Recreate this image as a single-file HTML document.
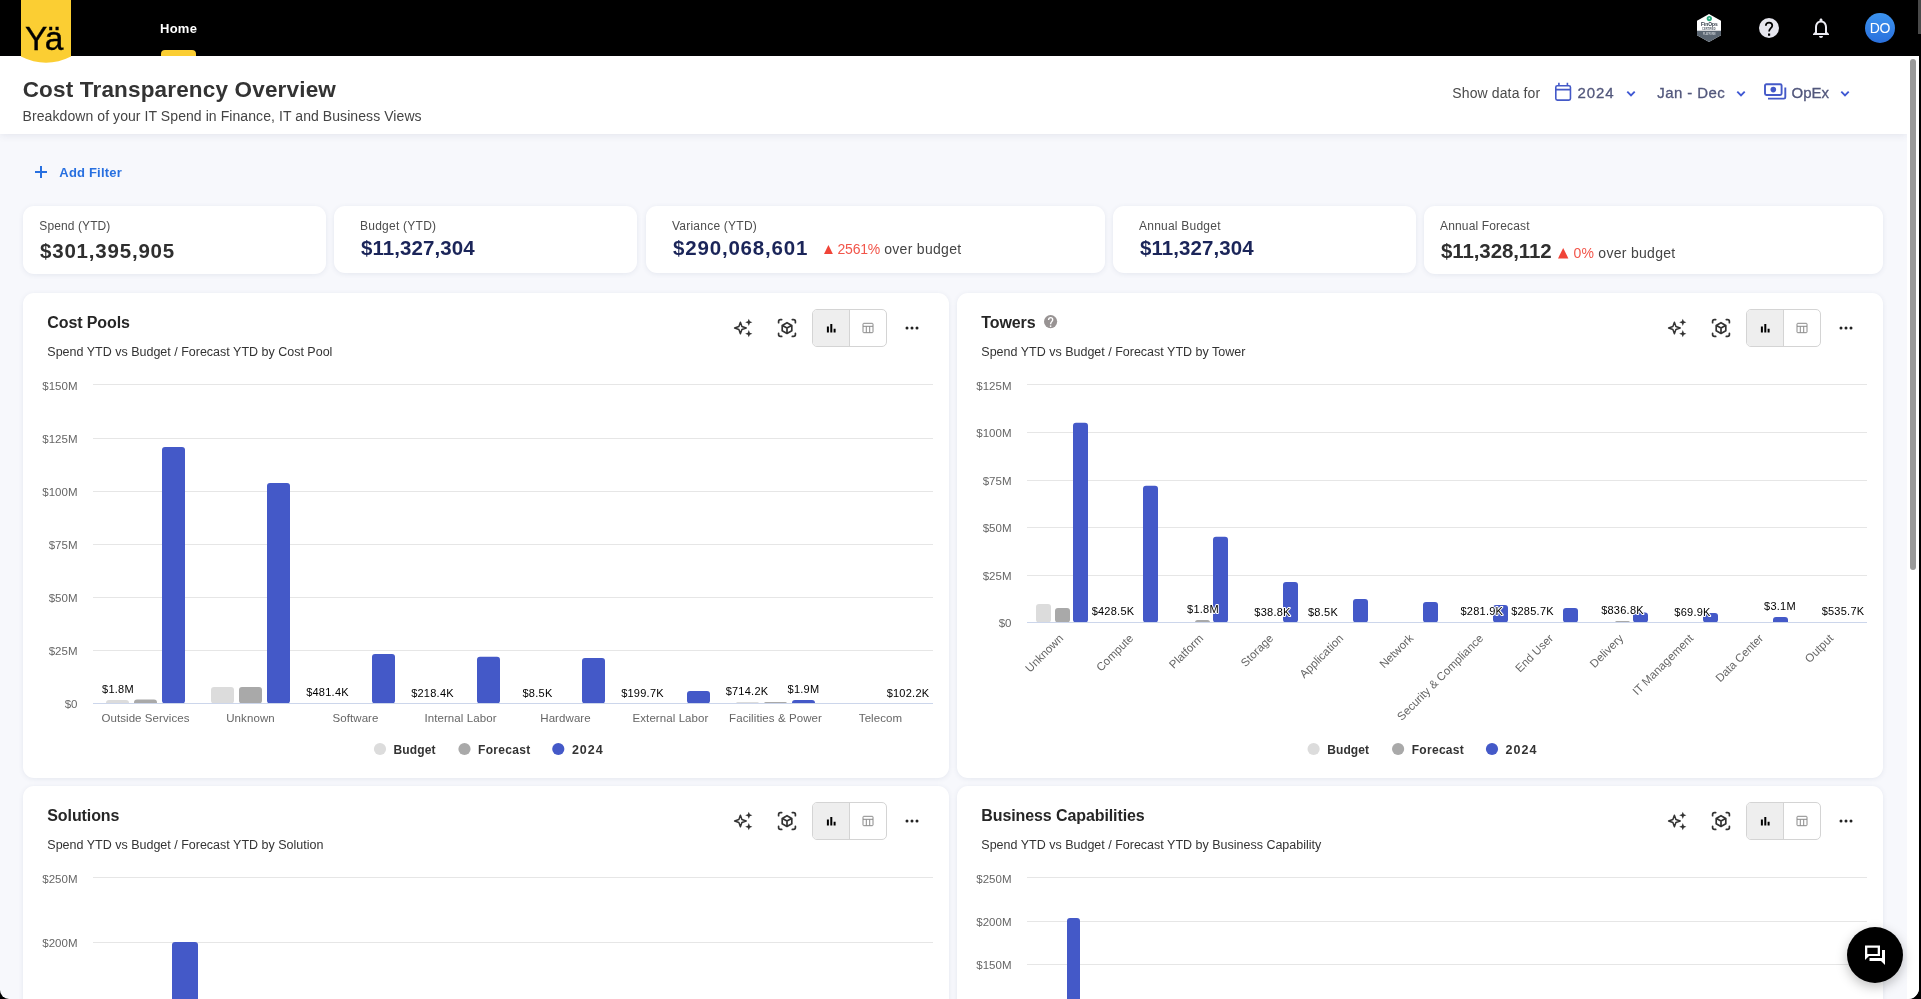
<!DOCTYPE html>
<html lang="en"><head><meta charset="utf-8"><title>Cost Transparency Overview</title>
<style>
html,body{margin:0;padding:0;width:1921px;height:999px;overflow:hidden;background:#000;}
body{font-family:"Liberation Sans",sans-serif;color:#333;-webkit-font-smoothing:antialiased;}
#app{will-change:transform;position:absolute;left:0;top:0;width:1919px;height:999px;background:#f7f8fc;overflow:hidden;border-bottom-right-radius:11px;border-bottom-left-radius:9px;}
.abs{position:absolute;white-space:nowrap;line-height:1;}
#topbar{position:absolute;left:0;top:0;width:1919px;height:56px;background:#000;}
#hdr{position:absolute;left:0;top:56px;width:1907px;height:78px;background:#fff;box-shadow:0 1px 8px rgba(40,50,90,.10);}
#track{position:absolute;left:1907px;top:56px;width:12px;height:943px;background:#fff;}
#thumb{position:absolute;left:1910px;top:59px;width:6px;height:511px;background:#9a9a9a;border-radius:3px;}
.card{position:absolute;background:#fff;border-radius:11px;box-shadow:0 1px 5px rgba(70,90,130,.10);}
.kl{font-size:12px;color:#4d4d4d;}
.kv{font-size:20.5px;font-weight:bold;}
.navy{color:#1b2559;}
.dk{color:#2f2f2f;}
.red{color:#f2554a;}
.ct{font-size:16px;font-weight:bold;color:#262626;}
.cs{font-size:12.5px;color:#333;}
svg{position:absolute;overflow:visible;}
svg text{font-family:"Liberation Sans",sans-serif;}
.yl{font-size:11.5px;fill:#666;text-anchor:end;}
.xl{font-size:11.5px;letter-spacing:.08px;fill:#666;text-anchor:middle;}
.xr{font-size:11.5px;fill:#666;text-anchor:end;}
.dl{font-size:11px;letter-spacing:.25px;fill:#000;text-anchor:middle;paint-order:stroke;stroke:#fff;stroke-width:2px;stroke-linejoin:round;}
.lg{font-size:13px;font-weight:bold;fill:#333;}
.tg{position:absolute;width:75px;height:38px;border:1px solid #d4d4d4;border-radius:5px;box-sizing:border-box;background:#fff;overflow:hidden;}
.tg i{position:absolute;left:0;top:0;width:37px;height:36px;background:#eee;border-right:1px solid #d4d4d4;box-sizing:border-box;}
</style></head><body>
<div id="app">

<div id="topbar"></div>
<div id="hdr"></div>
<div id="track"></div><div id="thumb"></div>
<svg style="left:21px;top:0" width="50" height="64" viewBox="0 0 50 64"><path d="M0 0H50V56.500Q25 69 0 56.500Z" fill="#fbce33"/></svg>
<div class="abs" style="left:25px;top:21.5px;font-size:33.5px;color:#000;letter-spacing:-2.5px;-webkit-text-stroke:.35px #000">Y&auml;</div>
<div class="abs" style="left:160px;top:22px;font-size:13px;font-weight:bold;color:#fff;letter-spacing:.25px">Home</div>
<div class="abs" style="left:161px;top:50px;width:35px;height:6px;background:#fbce33;border-radius:4px 4px 0 0"></div>
<svg style="left:1696px;top:13px" width="26" height="30" viewBox="0 0 26 30">
<path d="M13 1L25 7.800V22.200L13 29L1 22.200V7.800Z" fill="#fff"/>
<path d="M1 17.800H25V22.200L13 29L1 22.200Z" fill="#5b6672"/>
<circle cx="13.300" cy="5.600" r="2.600" fill="#2aa87e"/>
<circle cx="13.300" cy="5.400" r=".8" fill="#c8efe0"/>
<text x="4.900" y="12.800" font-size="5.400" font-weight="bold" fill="#2a3340" textLength="16.800" lengthAdjust="spacingAndGlyphs">FinOps</text>
<text x="6.100" y="16.600" font-size="2.600" font-weight="bold" fill="#59616c" textLength="13.600" lengthAdjust="spacingAndGlyphs">CERTIFIED</text>
<text x="7" y="21.800" font-size="2.700" font-weight="bold" fill="#ccd1d6" textLength="12.400" lengthAdjust="spacingAndGlyphs">PLATFORM</text>
</svg>
<svg style="left:1759px;top:18px" width="20" height="20" viewBox="0 0 24 24"><circle cx="12" cy="12" r="12" fill="#e6e6ee"/>
<path d="M8.200 9.300C8.200 6.700 9.900 5.400 12 5.400C14.200 5.400 15.900 6.800 15.900 8.900C15.900 12.100 12.100 12.400 12.100 16.300" fill="none" stroke="#000" stroke-width="2.100"/><rect x="10.800" y="18.600" width="2.600" height="2.700" fill="#000"/></svg>
<svg style="left:1809px;top:16px" width="24" height="24" viewBox="0 0 24 24"><path fill="#ececf3" d="M12 22c1.1 0 2-.9 2-2h-4c0 1.1.9 2 2 2zm6-6v-5c0-3.070-1.630-5.640-4.500-6.320V4c0-.830-.670-1.500-1.500-1.500s-1.500.670-1.500 1.500v.680C7.640 5.360 6 7.920 6 11v5l-2 2v1h16v-1l-2-2zm-2 1H8v-6c0-2.480 1.510-4.500 4-4.500s4 2.020 4 4.500v6z"/></svg>
<div class="abs" style="left:1865px;top:13px;width:30px;height:30px;border-radius:50%;background:linear-gradient(#3c93ee,#2a70dd);"></div>
<div class="abs" style="left:1865px;top:20.5px;width:30px;text-align:center;font-size:14px;color:#fff;letter-spacing:-.2px">DO</div>
<div class="abs" style="left:22.7px;top:78.5px;font-size:22.5px;font-weight:bold;color:#333;letter-spacing:.17px;">Cost Transparency Overview</div>
<div class="abs" style="left:22.6px;top:109px;font-size:14px;color:#444;letter-spacing:.075px;">Breakdown of your IT Spend in Finance, IT and Business Views</div>
<div class="abs" style="left:1452.3px;top:86px;font-size:14px;color:#4a4a4a;letter-spacing:.12px;">Show data for</div>
<svg style="left:1554px;top:82px" width="18" height="20" viewBox="0 0 18 20"><rect x="1.800" y="3.800" width="14.650" height="14.300" rx="1.500" fill="none" stroke="#4459c8" stroke-width="1.600"/><path d="M1.800 7.600H16.450M4.900 .8V4M13.400 .8V4" stroke="#4459c8" stroke-width="1.600" fill="none"/></svg>
<div class="abs" style="left:1577.5px;top:85px;font-size:15px;color:#52577c;letter-spacing:.9px;-webkit-text-stroke:.3px #52577c">2024</div>
<svg style="left:1626px;top:90px" width="10" height="8" viewBox="0 0 10 8"><path d="M1.3 1.6L5 5.3L8.7 1.6" fill="none" stroke="#3f58d3" stroke-width="1.9"/></svg>
<div class="abs" style="left:1657.3px;top:85px;font-size:15px;color:#52577c;letter-spacing:.42px;-webkit-text-stroke:.3px #52577c">Jan - Dec</div>
<svg style="left:1736px;top:90px" width="10" height="8" viewBox="0 0 10 8"><path d="M1.3 1.6L5 5.3L8.7 1.6" fill="none" stroke="#3f58d3" stroke-width="1.9"/></svg>
<svg style="left:1764px;top:83px" width="23" height="18" viewBox="0 0 23 18"><rect x="1" y="1.2" width="16.6" height="10.8" rx="1.4" fill="none" stroke="#4459c8" stroke-width="1.9"/><circle cx="9.3" cy="6.6" r="2.8" fill="#4459c8"/><path d="M21.3 4.4V14.2Q21.3 15.6 19.9 15.6H4" fill="none" stroke="#4459c8" stroke-width="1.9"/></svg>
<div class="abs" style="left:1791.5px;top:85px;font-size:15px;color:#52577c;-webkit-text-stroke:.3px #52577c">OpEx</div>
<svg style="left:1840px;top:90px" width="10" height="8" viewBox="0 0 10 8"><path d="M1.3 1.6L5 5.3L8.7 1.6" fill="none" stroke="#3f58d3" stroke-width="1.9"/></svg>
<svg style="left:35px;top:166px" width="12" height="12" viewBox="0 0 12 12"><path d="M6 0V12M0 6H12" stroke="#2870e0" stroke-width="2" fill="none"/></svg>
<div class="abs" style="left:59.3px;top:166px;font-size:13px;font-weight:bold;color:#2870e0;letter-spacing:.2px;">Add Filter</div>
<div class="card" style="left:23px;top:206px;width:303px;height:67.7px"></div>
<div class="card" style="left:334px;top:206px;width:303px;height:67px"></div>
<div class="card" style="left:646px;top:206px;width:459px;height:67px"></div>
<div class="card" style="left:1113px;top:206px;width:303px;height:67px"></div>
<div class="card" style="left:1424px;top:206px;width:459px;height:67.7px"></div>
<div class="abs kl" style="left:39.3px;top:220px;letter-spacing:.1px">Spend (YTD)</div>
<div class="abs kv dk" style="left:40px;top:241px;letter-spacing:.8px">$301,395,905</div>
<div class="abs kl" style="left:360px;top:220px;letter-spacing:.25px">Budget (YTD)</div>
<div class="abs kv navy" style="left:361px;top:238px;letter-spacing:.07px">$11,327,304</div>
<div class="abs kl" style="left:672px;top:220px;letter-spacing:.23px">Variance (YTD)</div>
<div class="abs kv navy" style="left:673px;top:238px;letter-spacing:.82px">$290,068,601</div>
<svg style="left:823.5px;top:244.6px" width="8.9" height="8.9" viewBox="0 0 10 10"><path d="M5 0L10 10H0Z" fill="#f04438"/></svg>
<div class="abs red" style="left:837.5px;top:241.9px;font-size:14px;letter-spacing:-.2px">2561%</div>
<div class="abs" style="left:884.2px;top:241.9px;font-size:14px;color:#444;letter-spacing:.3px">over budget</div>
<div class="abs kl" style="left:1139px;top:220px;letter-spacing:.23px">Annual Budget</div>
<div class="abs kv navy" style="left:1140px;top:238px;letter-spacing:.07px">$11,327,304</div>
<div class="abs kl" style="left:1440px;top:220px;letter-spacing:.15px">Annual Forecast</div>
<div class="abs kv dk" style="left:1441px;top:240.7px;letter-spacing:-.1px">$11,328,112</div>
<svg style="left:1558.3px;top:247.6px" width="10.4" height="10.4" viewBox="0 0 10 10"><path d="M5 0L10 10H0Z" fill="#f04438"/></svg>
<div class="abs red" style="left:1573.6px;top:246.1px;font-size:14px">0%</div>
<div class="abs" style="left:1598.3px;top:246.1px;font-size:14px;color:#444;letter-spacing:.3px">over budget</div>
<div class="card" style="left:23px;top:293px;width:926px;height:484.5px"></div>
<div class="abs ct" style="left:47.3px;top:314.7px;letter-spacing:-.1px">Cost Pools</div>
<div class="abs cs" style="left:47.3px;top:345.7px">Spend YTD vs Budget / Forecast YTD by Cost Pool</div>
<svg style="left:731px;top:316px" width="24" height="24" viewBox="0 0 24 24"><path d="M9.400 6.200L10.900 10.500L15.200 12L10.900 13.500L9.400 17.800L7.900 13.500L3.600 12L7.900 10.500Z" fill="none" stroke="#333" stroke-width="1.500" stroke-linejoin="round"/><path d="M17.800 2.700L18.800 5.300L21.400 6.300L18.800 7.300L17.800 9.900L16.800 7.300L14.200 6.300L16.800 5.300Z" fill="#333"/><path d="M17.800 14.100L18.800 16.700L21.400 17.700L18.800 18.700L17.800 21.300L16.800 18.700L14.200 17.700L16.800 16.700Z" fill="#333"/></svg>
<svg style="left:775px;top:316px" width="24" height="24" viewBox="0 0 24 24"><g fill="none" stroke="#333" stroke-width="1.700" stroke-linecap="round" stroke-linejoin="round"><path d="M3.600 6.700V5.400Q3.600 3.600 5.400 3.600H6.700M17.300 3.600H18.600Q20.400 3.600 20.400 5.400V6.700M20.400 17.300V18.600Q20.400 20.400 18.600 20.400H17.300M6.700 20.400H5.400Q3.600 20.400 3.600 18.600V17.300"/><path d="M12 6.700L16.800 9.400V14.700L12 17.400L7.200 14.700V9.400ZM7.400 9.500L12 12.100L16.600 9.500M12 12.100V17.300"/></g></svg>
<div class="tg" style="left:812px;top:309px"><i></i></div>
<svg style="left:826.6px;top:323.6px" width="10" height="10" viewBox="0 0 10 10"><path d="M.9 2.600V8.500M4.300 0V8.500M7.600 4.700V8.500" stroke="#000" stroke-width="2" fill="none"/></svg>
<svg style="left:862px;top:322px" width="12" height="12" viewBox="0 0 12 12"><g fill="none" stroke="#8a8a8a" stroke-width="1"><rect x="1" y="1.300" width="10" height="9.400" rx=".8"/><path d="M1 4.300H11M4.300 4.300V10.700M7.700 4.300V10.700"/></g></svg>
<svg style="left:904px;top:326px" width="16" height="4" viewBox="0 0 16 4"><circle cx="3" cy="2" r="1.500" fill="#222"/><circle cx="8" cy="2" r="1.500" fill="#222"/><circle cx="13" cy="2" r="1.500" fill="#222"/></svg>
<svg style="left:0;top:0" width="1919" height="999" viewBox="0 0 1919 999"><path d="M93 384.5H933" stroke="#e6e6e6" stroke-width="1"/><text class="yl" x="77.5" y="389.8">$150M</text><path d="M93 438.5H933" stroke="#e6e6e6" stroke-width="1"/><text class="yl" x="77.5" y="442.5">$125M</text><path d="M93 491.5H933" stroke="#e6e6e6" stroke-width="1"/><text class="yl" x="77.5" y="495.5">$100M</text><path d="M93 544.5H933" stroke="#e6e6e6" stroke-width="1"/><text class="yl" x="77.5" y="548.5">$75M</text><path d="M93 597.5H933" stroke="#e6e6e6" stroke-width="1"/><text class="yl" x="77.5" y="601.5">$50M</text><path d="M93 650.5H933" stroke="#e6e6e6" stroke-width="1"/><text class="yl" x="77.5" y="654.5">$25M</text><text class="yl" x="77.5" y="707.5">$0</text><path d="M106.00 703.5V703.00Q106.00 700.00 109.00 700.00H126.00Q129.00 700.00 129.00 703.00V703.5Z" fill="#dcdcdc"/><path d="M134.00 703.5V702.50Q134.00 699.50 137.00 699.50H154.00Q157.00 699.50 157.00 702.50V703.5Z" fill="#a9a9a9"/><rect x="162.00" y="447.00" width="23" height="256.50" rx="3" fill="#4459c8"/><rect x="211.00" y="687.00" width="23" height="16.50" rx="3" fill="#dcdcdc"/><rect x="239.00" y="687.00" width="23" height="16.50" rx="3" fill="#a9a9a9"/><rect x="267.00" y="483.00" width="23" height="220.50" rx="3" fill="#4459c8"/><rect x="372.00" y="654.00" width="23" height="49.50" rx="3" fill="#4459c8"/><rect x="477.00" y="656.80" width="23" height="46.70" rx="3" fill="#4459c8"/><rect x="582.00" y="658.00" width="23" height="45.50" rx="3" fill="#4459c8"/><rect x="687.00" y="691.00" width="23" height="12.50" rx="3" fill="#4459c8"/><path d="M736.00 703.5V703.50Q736.00 702.00 737.50 702.00H757.50Q759.00 702.00 759.00 703.50V703.5Z" fill="#dcdcdc"/><path d="M764.00 703.5V703.50Q764.00 702.00 765.50 702.00H785.50Q787.00 702.00 787.00 703.50V703.5Z" fill="#a9a9a9"/><path d="M792.00 703.5V703.00Q792.00 700.00 795.00 700.00H812.00Q815.00 700.00 815.00 703.00V703.5Z" fill="#4459c8"/><path d="M93 703.5H933" stroke="#ccd6eb" stroke-width="1"/><text class="xl" x="145.5" y="722.0">Outside Services</text><text class="xl" x="250.5" y="722.0">Unknown</text><text class="xl" x="355.5" y="722.0">Software</text><text class="xl" x="460.5" y="722.0">Internal Labor</text><text class="xl" x="565.5" y="722.0">Hardware</text><text class="xl" x="670.5" y="722.0">External Labor</text><text class="xl" x="775.5" y="722.0">Facilities &amp; Power</text><text class="xl" x="880.5" y="722.0">Telecom</text><text class="dl" x="118" y="693">$1.8M</text><text class="dl" x="327.5" y="696">$481.4K</text><text class="dl" x="432.5" y="697">$218.4K</text><text class="dl" x="537.5" y="697">$8.5K</text><text class="dl" x="642.5" y="697">$199.7K</text><text class="dl" x="747" y="694.5">$714.2K</text><text class="dl" x="803.5" y="693">$1.9M</text><text class="dl" x="908" y="697">$102.2K</text><circle cx="380" cy="749" r="6.1" fill="#dcdcdc"/><text class="lg" x="393.6" y="753.8" style="letter-spacing:0.1px;font-size:12px">Budget</text><circle cx="464.5" cy="749" r="6.1" fill="#a9a9a9"/><text class="lg" x="478.1" y="753.8" style="letter-spacing:0.3px;font-size:12px">Forecast</text><circle cx="558.3" cy="749" r="6.1" fill="#4459c8"/><text class="lg" x="571.9" y="753.8" style="letter-spacing:1.0px;font-size:12.5px">2024</text></svg>
<div class="card" style="left:957px;top:293px;width:926px;height:484.5px"></div>
<div class="abs ct" style="left:981.3px;top:314.7px;letter-spacing:-.1px">Towers</div>
<div class="abs cs" style="left:981.3px;top:345.7px">Spend YTD vs Budget / Forecast YTD by Tower</div>
<svg style="left:1665px;top:316px" width="24" height="24" viewBox="0 0 24 24"><path d="M9.400 6.200L10.900 10.500L15.200 12L10.900 13.500L9.400 17.800L7.900 13.500L3.600 12L7.900 10.500Z" fill="none" stroke="#333" stroke-width="1.500" stroke-linejoin="round"/><path d="M17.800 2.700L18.800 5.300L21.400 6.300L18.800 7.300L17.800 9.900L16.800 7.300L14.200 6.300L16.800 5.300Z" fill="#333"/><path d="M17.800 14.100L18.800 16.700L21.400 17.700L18.800 18.700L17.800 21.300L16.800 18.700L14.200 17.700L16.800 16.700Z" fill="#333"/></svg>
<svg style="left:1709px;top:316px" width="24" height="24" viewBox="0 0 24 24"><g fill="none" stroke="#333" stroke-width="1.700" stroke-linecap="round" stroke-linejoin="round"><path d="M3.600 6.700V5.400Q3.600 3.600 5.400 3.600H6.700M17.300 3.600H18.600Q20.400 3.600 20.400 5.400V6.700M20.400 17.300V18.600Q20.400 20.400 18.600 20.400H17.300M6.700 20.400H5.400Q3.600 20.400 3.600 18.600V17.300"/><path d="M12 6.700L16.800 9.400V14.700L12 17.400L7.200 14.700V9.400ZM7.400 9.500L12 12.100L16.600 9.500M12 12.100V17.300"/></g></svg>
<div class="tg" style="left:1746px;top:309px"><i></i></div>
<svg style="left:1760.6px;top:323.6px" width="10" height="10" viewBox="0 0 10 10"><path d="M.9 2.600V8.500M4.300 0V8.500M7.600 4.700V8.500" stroke="#000" stroke-width="2" fill="none"/></svg>
<svg style="left:1796px;top:322px" width="12" height="12" viewBox="0 0 12 12"><g fill="none" stroke="#8a8a8a" stroke-width="1"><rect x="1" y="1.300" width="10" height="9.400" rx=".8"/><path d="M1 4.300H11M4.300 4.300V10.700M7.700 4.300V10.700"/></g></svg>
<svg style="left:1838px;top:326px" width="16" height="4" viewBox="0 0 16 4"><circle cx="3" cy="2" r="1.500" fill="#222"/><circle cx="8" cy="2" r="1.500" fill="#222"/><circle cx="13" cy="2" r="1.500" fill="#222"/></svg>
<svg style="left:0;top:0" width="1919" height="999" viewBox="0 0 1919 999"><path d="M1027 384.5H1867" stroke="#e6e6e6" stroke-width="1"/><text class="yl" x="1011.5" y="389.8">$125M</text><path d="M1027 432.5H1867" stroke="#e6e6e6" stroke-width="1"/><text class="yl" x="1011.5" y="436.5">$100M</text><path d="M1027 480.5H1867" stroke="#e6e6e6" stroke-width="1"/><text class="yl" x="1011.5" y="484.5">$75M</text><path d="M1027 527.5H1867" stroke="#e6e6e6" stroke-width="1"/><text class="yl" x="1011.5" y="531.5">$50M</text><path d="M1027 575.5H1867" stroke="#e6e6e6" stroke-width="1"/><text class="yl" x="1011.5" y="579.5">$25M</text><text class="yl" x="1011.5" y="626.5">$0</text><rect x="1036.00" y="604.00" width="15" height="18.50" rx="3" fill="#dcdcdc"/><rect x="1055.00" y="608.00" width="15" height="14.50" rx="3" fill="#a9a9a9"/><rect x="1073.00" y="422.80" width="15" height="199.70" rx="3" fill="#4459c8"/><rect x="1143.00" y="485.80" width="15" height="136.70" rx="3" fill="#4459c8"/><path d="M1195.00 622.5V622.50Q1195.00 620.00 1197.50 620.00H1207.50Q1210.00 620.00 1210.00 622.50V622.5Z" fill="#a9a9a9"/><rect x="1213.00" y="536.80" width="15" height="85.70" rx="3" fill="#4459c8"/><rect x="1283.00" y="582.00" width="15" height="40.50" rx="3" fill="#4459c8"/><rect x="1353.00" y="599.00" width="15" height="23.50" rx="3" fill="#4459c8"/><rect x="1423.00" y="602.00" width="15" height="20.50" rx="3" fill="#4459c8"/><rect x="1493.00" y="605.00" width="15" height="17.50" rx="3" fill="#4459c8"/><rect x="1563.00" y="608.00" width="15" height="14.50" rx="3" fill="#4459c8"/><path d="M1615.00 622.5V622.50Q1615.00 621.00 1616.50 621.00H1628.50Q1630.00 621.00 1630.00 622.50V622.5Z" fill="#a9a9a9"/><rect x="1633.00" y="612.50" width="15" height="10.00" rx="3" fill="#4459c8"/><rect x="1703.00" y="613.00" width="15" height="9.50" rx="3" fill="#4459c8"/><path d="M1773.00 622.5V620.00Q1773.00 617.00 1776.00 617.00H1785.00Q1788.00 617.00 1788.00 620.00V622.5Z" fill="#4459c8"/><path d="M1027 622.5H1867" stroke="#ccd6eb" stroke-width="1"/><text class="xr" transform="translate(1064.0 639.0) rotate(-45)">Unknown</text><text class="xr" transform="translate(1134.0 639.0) rotate(-45)">Compute</text><text class="xr" transform="translate(1204.0 639.0) rotate(-45)">Platform</text><text class="xr" transform="translate(1274.0 639.0) rotate(-45)">Storage</text><text class="xr" transform="translate(1344.0 639.0) rotate(-45)">Application</text><text class="xr" transform="translate(1414.0 639.0) rotate(-45)">Network</text><text class="xr" transform="translate(1484.0 639.0) rotate(-45)">Security &amp; Compliance</text><text class="xr" transform="translate(1554.0 639.0) rotate(-45)">End User</text><text class="xr" transform="translate(1624.0 639.0) rotate(-45)">Delivery</text><text class="xr" transform="translate(1694.0 639.0) rotate(-45)">IT Management</text><text class="xr" transform="translate(1764.0 639.0) rotate(-45)">Data Center</text><text class="xr" transform="translate(1834.0 639.0) rotate(-45)">Output</text><text class="dl" x="1113" y="615">$428.5K</text><text class="dl" x="1203" y="613">$1.8M</text><text class="dl" x="1272.5" y="616">$38.8K</text><text class="dl" x="1323" y="616">$8.5K</text><text class="dl" x="1481.8" y="615">$281.9K</text><text class="dl" x="1532.5" y="615">$285.7K</text><text class="dl" x="1622.5" y="614">$836.8K</text><text class="dl" x="1692.5" y="616">$69.9K</text><text class="dl" x="1780" y="610">$3.1M</text><text class="dl" x="1843" y="615">$535.7K</text><circle cx="1313.6" cy="749" r="6.1" fill="#dcdcdc"/><text class="lg" x="1327.1999999999998" y="753.8" style="letter-spacing:0.1px;font-size:12px">Budget</text><circle cx="1398.1" cy="749" r="6.1" fill="#a9a9a9"/><text class="lg" x="1411.6999999999998" y="753.8" style="letter-spacing:0.3px;font-size:12px">Forecast</text><circle cx="1492" cy="749" r="6.1" fill="#4459c8"/><text class="lg" x="1505.6" y="753.8" style="letter-spacing:1.0px;font-size:12.5px">2024</text></svg>
<div class="card" style="left:23px;top:786px;width:926px;height:300px"></div>
<div class="abs ct" style="left:47.3px;top:807.7px;letter-spacing:-.1px">Solutions</div>
<div class="abs cs" style="left:47.3px;top:838.7px">Spend YTD vs Budget / Forecast YTD by Solution</div>
<svg style="left:731px;top:809px" width="24" height="24" viewBox="0 0 24 24"><path d="M9.400 6.200L10.900 10.500L15.200 12L10.900 13.500L9.400 17.800L7.900 13.500L3.600 12L7.900 10.500Z" fill="none" stroke="#333" stroke-width="1.500" stroke-linejoin="round"/><path d="M17.800 2.700L18.800 5.300L21.400 6.300L18.800 7.300L17.800 9.900L16.800 7.300L14.200 6.300L16.800 5.300Z" fill="#333"/><path d="M17.800 14.100L18.800 16.700L21.400 17.700L18.800 18.700L17.800 21.300L16.800 18.700L14.200 17.700L16.800 16.700Z" fill="#333"/></svg>
<svg style="left:775px;top:809px" width="24" height="24" viewBox="0 0 24 24"><g fill="none" stroke="#333" stroke-width="1.700" stroke-linecap="round" stroke-linejoin="round"><path d="M3.600 6.700V5.400Q3.600 3.600 5.400 3.600H6.700M17.300 3.600H18.600Q20.400 3.600 20.400 5.400V6.700M20.400 17.300V18.600Q20.400 20.400 18.600 20.400H17.300M6.700 20.400H5.400Q3.600 20.400 3.600 18.600V17.300"/><path d="M12 6.700L16.800 9.400V14.700L12 17.400L7.200 14.700V9.400ZM7.400 9.500L12 12.100L16.600 9.500M12 12.100V17.300"/></g></svg>
<div class="tg" style="left:812px;top:802px"><i></i></div>
<svg style="left:826.6px;top:816.6px" width="10" height="10" viewBox="0 0 10 10"><path d="M.9 2.600V8.500M4.300 0V8.500M7.600 4.700V8.500" stroke="#000" stroke-width="2" fill="none"/></svg>
<svg style="left:862px;top:815px" width="12" height="12" viewBox="0 0 12 12"><g fill="none" stroke="#8a8a8a" stroke-width="1"><rect x="1" y="1.300" width="10" height="9.400" rx=".8"/><path d="M1 4.300H11M4.300 4.300V10.700M7.700 4.300V10.700"/></g></svg>
<svg style="left:904px;top:819px" width="16" height="4" viewBox="0 0 16 4"><circle cx="3" cy="2" r="1.500" fill="#222"/><circle cx="8" cy="2" r="1.500" fill="#222"/><circle cx="13" cy="2" r="1.500" fill="#222"/></svg>
<svg style="left:0;top:0" width="1919" height="999" viewBox="0 0 1919 999"><path d="M93 877.5H933" stroke="#e6e6e6" stroke-width="1"/><text class="yl" x="77.5" y="883.4">$250M</text><path d="M93 942.5H933" stroke="#e6e6e6" stroke-width="1"/><text class="yl" x="77.5" y="946.6">$200M</text><rect x="172.00" y="942.00" width="26" height="158.00" rx="3" fill="#4459c8"/></svg>
<div class="card" style="left:957px;top:786px;width:926px;height:300px"></div>
<div class="abs ct" style="left:981.3px;top:807.7px;letter-spacing:-.1px">Business Capabilities</div>
<div class="abs cs" style="left:981.3px;top:838.7px">Spend YTD vs Budget / Forecast YTD by Business Capability</div>
<svg style="left:1665px;top:809px" width="24" height="24" viewBox="0 0 24 24"><path d="M9.400 6.200L10.900 10.500L15.200 12L10.900 13.500L9.400 17.800L7.900 13.500L3.600 12L7.900 10.500Z" fill="none" stroke="#333" stroke-width="1.500" stroke-linejoin="round"/><path d="M17.800 2.700L18.800 5.300L21.400 6.300L18.800 7.300L17.800 9.900L16.800 7.300L14.200 6.300L16.800 5.300Z" fill="#333"/><path d="M17.800 14.100L18.800 16.700L21.400 17.700L18.800 18.700L17.800 21.300L16.800 18.700L14.200 17.700L16.800 16.700Z" fill="#333"/></svg>
<svg style="left:1709px;top:809px" width="24" height="24" viewBox="0 0 24 24"><g fill="none" stroke="#333" stroke-width="1.700" stroke-linecap="round" stroke-linejoin="round"><path d="M3.600 6.700V5.400Q3.600 3.600 5.400 3.600H6.700M17.300 3.600H18.600Q20.400 3.600 20.400 5.400V6.700M20.400 17.300V18.600Q20.400 20.400 18.600 20.400H17.300M6.700 20.400H5.400Q3.600 20.400 3.600 18.600V17.300"/><path d="M12 6.700L16.800 9.400V14.700L12 17.400L7.200 14.700V9.400ZM7.400 9.500L12 12.100L16.600 9.500M12 12.100V17.300"/></g></svg>
<div class="tg" style="left:1746px;top:802px"><i></i></div>
<svg style="left:1760.6px;top:816.6px" width="10" height="10" viewBox="0 0 10 10"><path d="M.9 2.600V8.500M4.300 0V8.500M7.600 4.700V8.500" stroke="#000" stroke-width="2" fill="none"/></svg>
<svg style="left:1796px;top:815px" width="12" height="12" viewBox="0 0 12 12"><g fill="none" stroke="#8a8a8a" stroke-width="1"><rect x="1" y="1.300" width="10" height="9.400" rx=".8"/><path d="M1 4.300H11M4.300 4.300V10.700M7.700 4.300V10.700"/></g></svg>
<svg style="left:1838px;top:819px" width="16" height="4" viewBox="0 0 16 4"><circle cx="3" cy="2" r="1.500" fill="#222"/><circle cx="8" cy="2" r="1.500" fill="#222"/><circle cx="13" cy="2" r="1.500" fill="#222"/></svg>
<svg style="left:0;top:0" width="1919" height="999" viewBox="0 0 1919 999"><path d="M1027 877.5H1867" stroke="#e6e6e6" stroke-width="1"/><text class="yl" x="1011.5" y="883.4">$250M</text><path d="M1027 921.5H1867" stroke="#e6e6e6" stroke-width="1"/><text class="yl" x="1011.5" y="925.6">$200M</text><path d="M1027 964.5H1867" stroke="#e6e6e6" stroke-width="1"/><text class="yl" x="1011.5" y="968.6">$150M</text><rect x="1067.00" y="918.00" width="13" height="182.00" rx="3" fill="#4459c8"/></svg>
<svg style="left:1043.800px;top:315.400px" width="13.200" height="13.200" viewBox="0 0 24 24"><circle cx="12" cy="12" r="12" fill="#989393"/><path d="M8.300 9.300C8.300 6.400 9.900 4.700 12.200 4.700C14.600 4.700 15.800 6.300 15.800 8.500C15.800 12 12 12.400 12 16.800" fill="none" stroke="#fff" stroke-width="2.500"/><rect x="10.700" y="19" width="2.600" height="2.700" fill="#fff"/></svg>
<div class="abs" style="left:1847px;top:927px;width:56px;height:56px;border-radius:50%;background:#000;box-shadow:0 4px 12px rgba(0,0,0,.25)"></div>
<svg style="left:1864px;top:944px" width="22" height="22" viewBox="0 0 22 22"><path d="M1 1.500H16V12H5L1 16Z M3.300 3.700V10H13.700V3.700Z" fill="#fff" fill-rule="evenodd"/><path d="M18 6H21V21L17 17H5.500V14H18Z" fill="#fff"/></svg>
</div>
<div style="position:absolute;left:1918px;top:0;width:3px;height:34px;background:#4a4a4a"></div>
</body></html>
